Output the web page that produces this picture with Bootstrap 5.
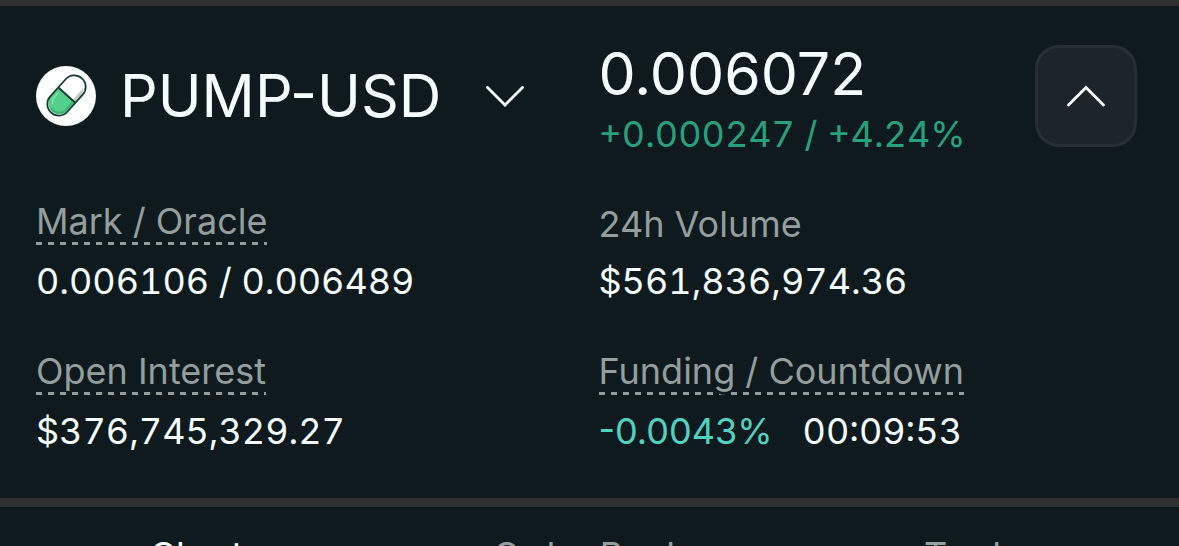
<!DOCTYPE html>
<html lang="en">
<head>
<meta charset="utf-8">
<meta name="viewport" content="width=device-width, initial-scale=1">
<title>PUMP-USD</title>
<link href="https://cdn.jsdelivr.net/npm/bootstrap@5.3.0/dist/css/bootstrap.min.css" rel="stylesheet">
<style>
  body {
    background: #0f1a1f;
    color: #f6fefd;
    font-family: Inter, "Liberation Sans", sans-serif;
    font-size: 36px;
    line-height: 48px;
    font-variant-numeric: tabular-nums;
  }
  .market-page { height: 100vh; }
  .market-head { border-top: 6px solid #303030; border-bottom: 9px solid #303030; padding: 39px 36px 34px; }
  .market-grid { --bs-gutter-x: 18px; }
  .market-stats { --bs-gutter-y: 30px; padding-top: 29px; }
  .pair-btn { color: inherit; font-size: 59px; line-height: 60px; height: 102px; gap: 24px; }
  .pair-btn .chev { margin-left: 20px; }
  .price { font-size: 59px; line-height: 58px; font-variant-numeric: normal; }
  .change { color: #26a17b; line-height: 62px; }
  .collapse-btn { width: 102px; height: 102px; border: 3px solid #272f34; border-radius: 24px; background: #1d242a; margin-right: 6px; }
  .collapse-btn:hover { background: #272f34; border-color: #272f34; }
  .stat dt, .stat dd { font-weight: 400; margin-bottom: 0; }
  .stat dt { color: #949e9c; line-height: 54px; font-variant-numeric: normal; }
  .stat dd { line-height: 66px; }
  .stat-plain dt { line-height: 60px; }
  .stat-plain dd { line-height: 54px; }
  /* dashed rule under the label; the shadow clears it around descenders */
  .hint {
    padding-bottom: 2px;
    background: repeating-linear-gradient(90deg, #949e9c 0 6px, transparent 6px 12px) left bottom / 100% 3px no-repeat;
    text-shadow: 3px 0 #0f1a1f, -3px 0 #0f1a1f, 0 3px #0f1a1f;
  }
  .funding { color: #50d2c1; margin-right: 30px; font-variant-numeric: normal; }
  .view-tabs .nav-link { color: #949e9c; padding: 24px 0; }
  .view-tabs .nav-link.active { color: #f6fefd; }
</style>
</head>
<body>
<div class="market-page overflow-hidden">
  <header class="market-head">
    <div class="row market-grid">
      <div class="col-6">
        <button type="button" class="pair-btn btn border-0 p-0 d-flex align-items-center" aria-haspopup="true">
          <svg width="60" height="60" viewBox="0 0 60 60" aria-hidden="true">
            <circle cx="30" cy="30" r="30" fill="#fdfefe"/>
            <g transform="rotate(42 30.500 29.500)">
              <path d="M19.500 29v-9a11 11 0 0 1 22 0v9z" fill="#fff"/>
              <path d="M38 29V13a11 11 0 0 1 3.500 7v9z" fill="#c3cdcb"/>
              <path d="M19.500 29h22v11a11 11 0 0 1-22 0z" fill="#55cf8b"/>
              <path d="M39.500 30v9a9 9 0 0 1-12 10" fill="none" stroke="#3eb273" stroke-width="2"/>
              <path d="M22.500 34v5a8 8 0 0 0 3 6" fill="none" stroke="#82e5aa" stroke-width="1.500" stroke-linecap="round"/>
              <rect x="19" y="6.500" width="23" height="46" rx="11.500" fill="none" stroke="#183d35" stroke-width="1.800"/>
              <path d="M19.500 29h22" stroke="#183d35" stroke-width="2"/>
            </g>
          </svg>
          <span>PUMP-USD</span>
          <svg class="chev" width="40" height="22" viewBox="0 0 40 22" fill="none" stroke="#f6fefd" stroke-width="2.800" stroke-linecap="round" aria-hidden="true"><path d="M2.500 2.500l17.500 17.500 17.500-17.500"/></svg>
        </button>
      </div>
      <div class="col-6 d-flex align-items-start justify-content-between">
        <div>
          <div class="price">0.006072</div>
          <div class="change">+0.000247 / +4.24%</div>
        </div>
        <button type="button" class="collapse-btn btn p-0 d-flex align-items-center justify-content-center" aria-label="Collapse market details">
          <svg width="40" height="22" viewBox="0 0 40 22" fill="none" stroke="#fff" stroke-width="2.800" stroke-linecap="round" aria-hidden="true"><path d="M2.500 20L20 2.500l17.500 17.500"/></svg>
        </button>
      </div>
    </div>
    <dl class="row market-grid market-stats mb-0">
      <div class="stat col-6">
        <dt><span class="hint">Mark / Oracle</span></dt>
        <dd>0.006106 / 0.006489</dd>
      </div>
      <div class="stat stat-plain col-6">
        <dt>24h Volume</dt>
        <dd>$561,836,974.36</dd>
      </div>
      <div class="stat col-6">
        <dt><span class="hint">Open Interest</span></dt>
        <dd>$376,745,329.27</dd>
      </div>
      <div class="stat col-6">
        <dt><span class="hint">Funding / Countdown</span></dt>
        <dd class="d-flex"><span class="funding">-0.0043%</span><span>00:09:53</span></dd>
      </div>
    </dl>
  </header>
  <nav class="view-tabs nav nav-justified">
    <a class="nav-link active" href="#chart" aria-current="page">Chart</a>
    <a class="nav-link" href="#book">Order Book</a>
    <a class="nav-link" href="#trades">Trades</a>
  </nav>
</div>
<script src="https://cdn.jsdelivr.net/npm/bootstrap@5.3.0/dist/js/bootstrap.bundle.min.js"></script>
</body>
</html>
